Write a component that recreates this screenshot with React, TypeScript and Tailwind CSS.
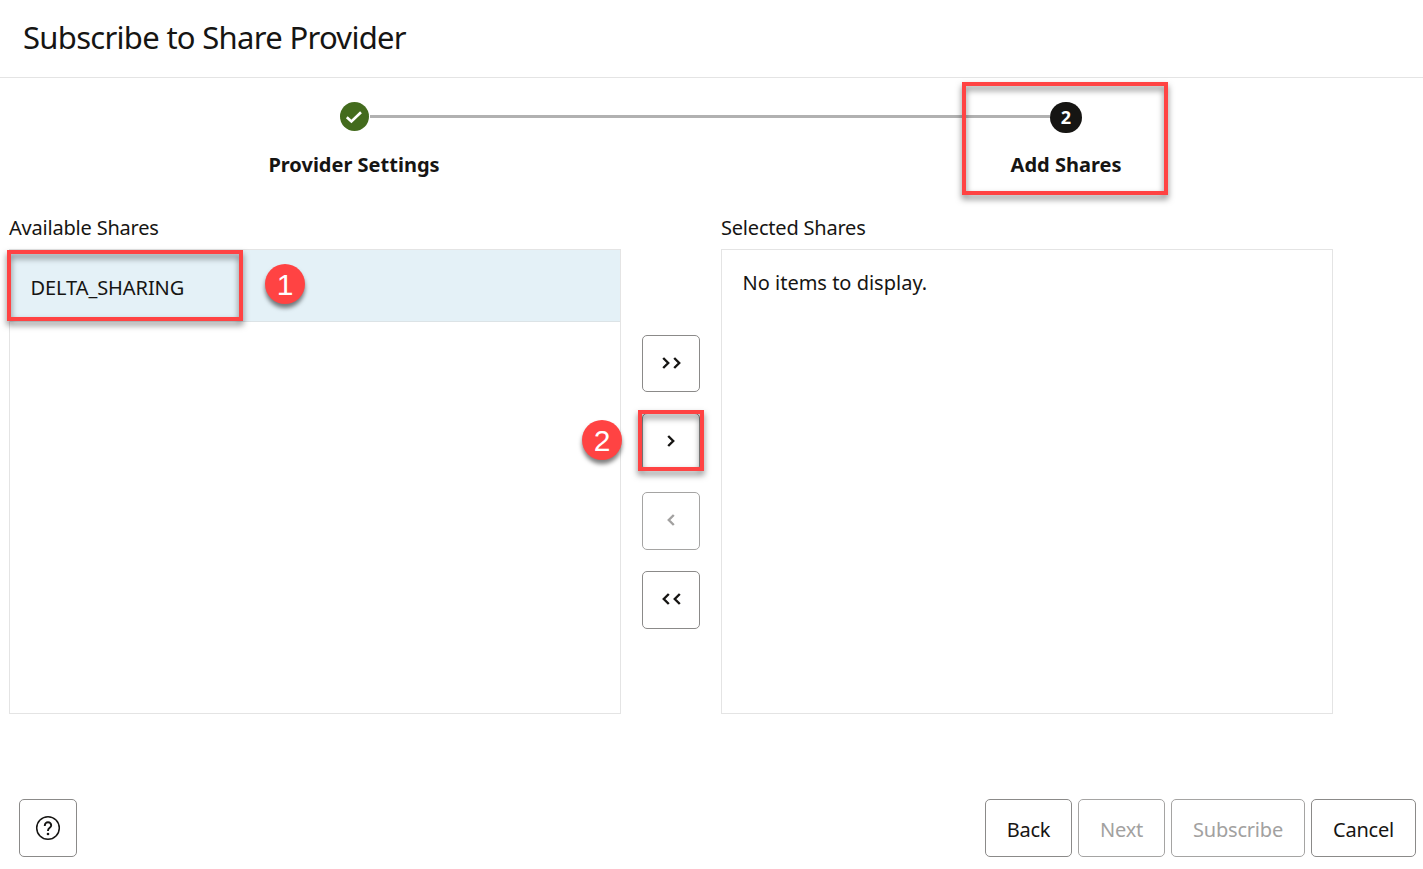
import type { ReactNode } from 'react';
import clsx from 'clsx';

function Chevron({ flip = false }: { flip?: boolean }) {
  return (
    <svg width="8" height="12" viewBox="0 0 8 12" fill="none" className={clsx('block', flip && '-scale-x-100')}>
      <path d="M1.2 1 6.2 6 1.2 11" stroke="currentColor" strokeWidth="2.4" />
    </svg>
  );
}

function Highlight({ className }: { className: string }) {
  return (
    <span
      className={clsx(
        'pointer-events-none absolute z-10 border-4 border-[#ff4343] drop-shadow-[0_4px_3px_rgba(0,0,0,0.5)]',
        className,
      )}
    />
  );
}

function Marker({ className, children }: { className: string; children: ReactNode }) {
  return (
    <span
      className={clsx(
        "absolute z-10 flex size-10 items-center justify-center rounded-full bg-[#ff4343] pt-px font-['Liberation_Sans',sans-serif] text-[30px] leading-none text-white shadow-[0_4px_4px_rgba(0,0,0,0.5)]",
        className,
      )}
    >
      {children}
    </span>
  );
}

interface MoveButtonProps {
  label: string;
  disabled?: boolean;
  className?: string;
  children: ReactNode;
}

function MoveButton({ label, disabled, className = 'h-[58px]', children }: MoveButtonProps) {
  return (
    <button
      aria-label={label}
      disabled={disabled}
      className={clsx(
        'flex w-[58px] items-center justify-center gap-[3px] rounded-[5px] border pb-[2px]',
        disabled ? 'border-[#a5a4a3] text-[#a2a1a0]' : 'border-[#8b8a89] text-[#161513]',
        className,
      )}
    >
      {children}
    </button>
  );
}

function FooterButton({ className, disabled, children }: { className: string; disabled?: boolean; children: ReactNode }) {
  return (
    <button
      disabled={disabled}
      className={clsx(
        'flex h-[58px] items-center justify-center whitespace-nowrap rounded-[5px] border pt-[3px] tracking-[-0.2px]',
        disabled ? 'border-[#a5a4a3] text-[#a2a1a0]' : 'border-[#8b8a89] text-[#161513]',
        className,
      )}
    >
      {children}
    </button>
  );
}

export default function App() {
  return (
    <div className="flex h-[869px] w-[1423px] flex-col overflow-hidden bg-white font-['Noto_Sans','Open_Sans',sans-serif] text-[20px] leading-[28px] text-[#161513]">
      <header className="flex h-[78px] shrink-0 items-center border-b border-[#e4e4e4] pb-[4px] pl-[23px]">
        <h1 className="text-[31px] leading-[40px] tracking-[-0.7px]">Subscribe to Share Provider</h1>
      </header>

      <section className="h-[136px] shrink-0 pt-[23px]">
        <div className="flex h-[32px] items-center pl-[339px]">
          <span className="mb-px ml-[0.5px] mr-[0.5px] flex size-[29px] items-center justify-center rounded-full bg-[#436b1d]">
            <svg width="18" height="14" viewBox="0 0 18 14" fill="none">
              <path d="M1.8 7.2 6.4 11.4 16 2.2" stroke="white" strokeWidth="2.6" />
            </svg>
          </span>
          <span className="mb-[2px] ml-px h-[3px] w-[680px] bg-[#b1b1b1]" />
          <span className="relative mt-px flex h-[31px] w-[32px] items-center justify-center rounded-full bg-[#161513] pb-px text-[18px] font-bold text-white">
            2
            <Highlight className="-left-[88px] -top-[20px] h-[113px] w-[206px]" />
          </span>
        </div>
        <div className="mt-[18px] grid grid-cols-[708px_716px] text-center font-bold">
          <span>Provider Settings</span>
          <span>Add Shares</span>
        </div>
      </section>

      <main className="flex h-[500px] shrink-0 gap-[21px] pl-[9px]">
        <div className="w-[612px]">
          <h2 className="h-[35px] whitespace-nowrap tracking-[-0.2px]">Available Shares</h2>
          <div className="h-[465px] border border-[#e4e4e4]">
            <div className="relative flex h-[72px] items-center border-b border-[#dce3e6] bg-[#e4f1f7] pl-[20.5px] pt-[4px]">
              <span className="tracking-[-0.08px]">DELTA_SHARING</span>
              <Highlight className="-left-[3px] top-0 h-[71px] w-[236px]" />
              <Marker className="left-[255px] top-[14px]">1</Marker>
            </div>
          </div>
        </div>

        <div className="flex w-[58px] flex-col gap-[21px] pt-[121px]">
          <MoveButton label="Move all right" className="h-[57px]">
            <Chevron />
            <Chevron />
          </MoveButton>
          <div className="relative">
            <MoveButton label="Move right" className="h-[58px]">
              <Chevron />
            </MoveButton>
            <Highlight className="-left-[4px] -top-[3px] h-[61px] w-[66px]" />
            <Marker className="-left-[60px] top-[7px]">2</Marker>
          </div>
          <MoveButton label="Move left" disabled>
            <Chevron flip />
          </MoveButton>
          <MoveButton label="Move all left">
            <Chevron flip />
            <Chevron flip />
          </MoveButton>
        </div>

        <div className="w-[612px]">
          <h2 className="h-[35px] whitespace-nowrap tracking-[-0.2px]">Selected Shares</h2>
          <div className="h-[465px] border border-[#e4e4e4] pl-[20.5px] pt-[19px]">No items to display.</div>
        </div>
      </main>

      <footer className="mt-[85px] flex h-[58px] shrink-0 items-center justify-between pl-[19px] pr-[7px]">
        <button
          aria-label="Help"
          className="flex size-[58px] items-center justify-center rounded-[5px] border border-[#8b8a89] pb-px text-[#161513]"
        >
          <svg width="26" height="26" viewBox="0 0 26 26" fill="none">
            <circle cx="13" cy="13" r="11.3" stroke="currentColor" strokeWidth="1.5" />
            <path
              d="M9.8 10.9V10.4A3.2 3.2 0 0 1 16.2 10.5C16.2 12.9 13 12.8 13 15.5V16"
              stroke="currentColor"
              strokeWidth="1.9"
            />
            <circle cx="13" cy="19" r="1.3" fill="currentColor" />
          </svg>
        </button>
        <div className="flex gap-[6px]">
          <FooterButton className="w-[87px]">Back</FooterButton>
          <FooterButton className="w-[87px]" disabled>
            Next
          </FooterButton>
          <FooterButton className="w-[134px]" disabled>
            Subscribe
          </FooterButton>
          <FooterButton className="w-[105px]">Cancel</FooterButton>
        </div>
      </footer>
    </div>
  );
}
